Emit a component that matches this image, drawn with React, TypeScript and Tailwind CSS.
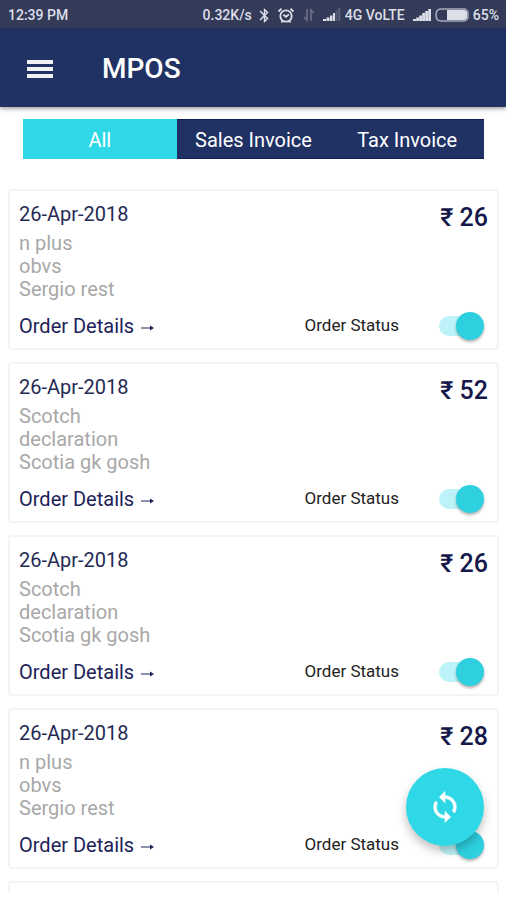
import React, { useState } from 'react';
import { MdBluetooth } from 'react-icons/md';

interface Order {
  id: number;
  date: string;
  items: string[];
  amount: number;
}

const orders: Order[] = [
  { id: 1, date: '26-Apr-2018', items: ['n plus', 'obvs', 'Sergio rest'], amount: 26 },
  { id: 2, date: '26-Apr-2018', items: ['Scotch', 'declaration', 'Scotia gk gosh'], amount: 52 },
  { id: 3, date: '26-Apr-2018', items: ['Scotch', 'declaration', 'Scotia gk gosh'], amount: 26 },
  { id: 4, date: '26-Apr-2018', items: ['n plus', 'obvs', 'Sergio rest'], amount: 28 },
];

const tabs = ['All', 'Sales Invoice', 'Tax Invoice'];

const StatusBar: React.FC = () => (
  <div className="flex h-7 shrink-0 items-center justify-between bg-[#343b59] pt-[2px] pr-[7px] pl-2 text-sm font-medium text-[#dcdfe8]">
    <span>12:39 PM</span>
    <div className="flex items-center">
      <span>0.32K/s</span>
      <MdBluetooth size={17} stroke="none" className="ml-1" />
      {/* Alarm clock */}
      <svg width="18" height="17" viewBox="0 0 18 16" fill="none" stroke="currentColor" strokeWidth="1.8" className="ml-1">
        <circle cx="9" cy="8.5" r="5.7" />
        <path d="M1.5 4 4.5 1.2M16.5 4 13.5 1.2M4.5 15l1-1.6M13.5 15l-1-1.6M6.3 7.2 9 9.300l3-2.400" />
      </svg>
      {/* Data up / down */}
      <svg width="12" height="14" viewBox="0 0 12 14" fill="none" stroke="#6d7288" strokeWidth="1.6" className="ml-2">
        <path d="M4 1v11L1 9M8 13V2l3 3" />
      </svg>
      <svg width="18" height="14" viewBox="0 0 18 14" fill="currentColor" className="ml-2">
        <path d="M0 11h3v2H0zM3.500 9.500h3V13h-3zM7 7.500h2.500V13H7zM10 5h2v8h-2z" />
        <path d="M12.500 2.500h2V13h-2zM15 0h2.500v13H15z" fill="#555b75" />
      </svg>
      <span className="ml-1">4G VoLTE</span>
      <svg width="18" height="14" viewBox="0 0 18 14" fill="currentColor" className="ml-2">
        <path d="M0 11h3v2H0zM3.200 9.500H6V13H3.200zM6.200 7.500H9V13H6.200zM9.200 5H12v8H9.200zM12.200 3H15v10h-2.800zM15.200 1H18v12h-2.800z" />
      </svg>
      {/* Battery */}
      <svg width="34" height="14" viewBox="0 0 34 14" className="ml-1">
        <path d="M6 1h23a4 4 0 0 1 4 4v4a4 4 0 0 1-4 4H6C2.500 13 1 10 1 7s1.500-6 5-6z" fill="none" stroke="#a9adbd" strokeWidth="1.500" />
        <path d="M12 2h17a3 3 0 0 1 3 3v4a3 3 0 0 1-3 3H12z" fill="#dcdfe8" />
      </svg>
      <span className="ml-1">65%</span>
    </div>
  </div>
);

const OrderCard: React.FC<{ order: Order }> = ({ order }) => {
  const [active, setActive] = useState(true);

  return (
    <article className="shrink-0 rounded border-2 border-[#f4f4f4] bg-white px-[9px] pt-[11px] pb-[6px]">
      <div className="flex items-start justify-between">
        <div>
          <h2 className="text-xl leading-6 text-[#252a55]">{order.date}</h2>
          <ul className="mt-[6px] text-xl leading-[23px] text-[#a8a8a8]">
            {order.items.map((item) => (
              <li key={item}>{item}</li>
            ))}
          </ul>
        </div>
        <p className="text-[25px] leading-8 font-medium text-[#14184a]">₹ {order.amount}</p>
      </div>

      <div className="mt-[9px] flex h-8 items-center justify-between">
        <a href="#details" className="flex items-center gap-[7px] text-xl text-[#1c2258]">
          Order Details
          <svg width="13" height="8" viewBox="0 0 13 8" className="mt-1">
            <path d="M0 4h10" stroke="currentColor" strokeWidth="1" />
            <path d="M9 1.500 13 4 9 6.500z" fill="currentColor" />
          </svg>
        </a>
        <label className="flex items-center gap-10 pr-1 text-[17px] text-[#222222]">
          Order Status
          <span className="relative flex h-7 w-[45px] items-center">
            <input
              type="checkbox"
              checked={active}
              onChange={() => setActive(!active)}
              className="peer h-5 w-10 cursor-pointer appearance-none rounded-full bg-gray-300 checked:bg-[#bdf3f8]"
            />
            <span className="pointer-events-none absolute left-0 h-7 w-7 rounded-full bg-gray-100 shadow-[0_2px_3px_rgba(0,0,0,0.3)] peer-checked:left-auto peer-checked:right-0 peer-checked:bg-[#2ed0e0]" />
          </span>
        </label>
      </div>
    </article>
  );
};

export default function App() {
  const [tab, setTab] = useState('All');

  return (
    <div className="flex h-screen flex-col bg-white pb-[7px] font-[Roboto,sans-serif]">
      <StatusBar />

      <header className="z-10 flex h-[79px] shrink-0 items-center gap-[49px] bg-[#203264] px-[27px] pt-[2px] text-white shadow-[0_2px_4px_rgba(0,0,0,0.35)]">
        <button type="button" aria-label="Menu">
          <svg width="26" height="18" viewBox="0 0 26 18" fill="#f0f0f4">
            <path d="M0 0h26v4H0zM0 7h26v4H0zM0 14h26v4H0z" />
          </svg>
        </button>
        <h1 className="text-[28px] font-medium">MPOS</h1>
      </header>

      <nav className="mt-3 mr-[22px] ml-[23px] grid h-10 shrink-0 grid-cols-3 bg-[#203264]">
        {tabs.map((name) => (
          <button
            key={name}
            type="button"
            onClick={() => setTab(name)}
            className={`pt-[2px] text-xl text-white ${tab === name ? 'bg-[#2ed8e6]' : 'border-y border-[#121f58]'}`}
          >
            {name}
          </button>
        ))}
      </nav>

      <main className="mt-[30px] flex min-h-0 flex-1 flex-col gap-3 overflow-hidden pr-[7px] pl-2">
        {orders.map((order) => (
          <OrderCard key={order.id} order={order} />
        ))}
        {/* Top edge of the next card */}
        <div className="min-h-0 flex-1 rounded-t border-2 border-b-0 border-[#f4f4f4]" />
      </main>

      <button
        type="button"
        aria-label="Refresh"
        className="fixed right-[22px] bottom-[54px] flex h-[78px] w-[78px] items-center justify-center rounded-full bg-[#2ed8e6] text-white shadow-[0_5px_10px_rgba(0,0,0,0.25)]"
      >
        <svg width="34" height="34" viewBox="0 0 24 24" fill="currentColor" stroke="currentColor" strokeWidth="0.4">
          <path d="M12 4V1L8 5l4 4V6c3.310 0 6 2.690 6 6 0 1.010-.250 1.970-.700 2.800l1.460 1.460C19.540 15.030 20 13.570 20 12c0-4.420-3.580-8-8-8z" />
          <path d="M12 18c-3.310 0-6-2.690-6-6 0-1.010.250-1.970.700-2.800L5.240 7.740C4.460 8.970 4 10.430 4 12c0 4.420 3.580 8 8 8v3l4-4-4-4v3z" />
        </svg>
      </button>
    </div>
  );
}
